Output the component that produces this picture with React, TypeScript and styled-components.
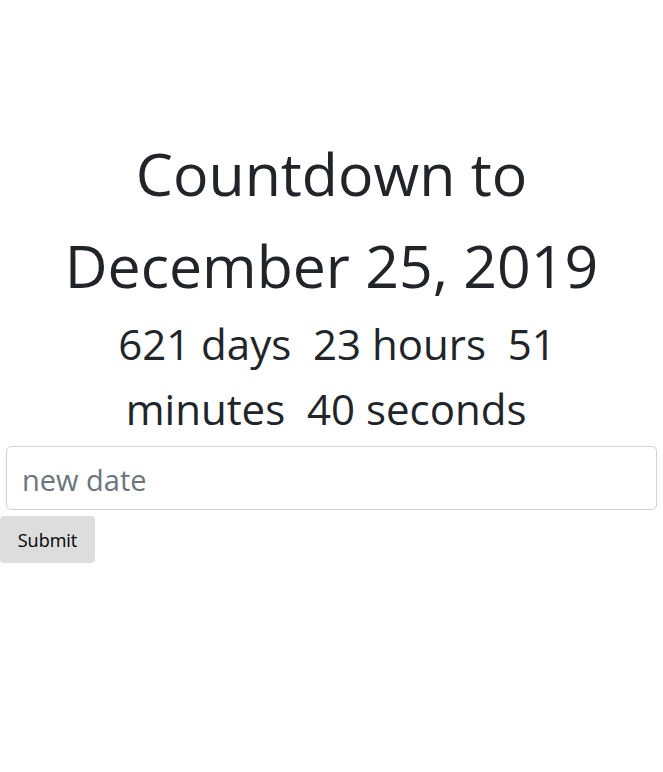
import styled, { createGlobalStyle } from 'styled-components';
import { useState } from 'react';

const GlobalStyle = createGlobalStyle`
  body {
    margin: 0;
    background: #fff;
    color: #212529;
    font-family: 'Open Sans', 'Noto Sans', sans-serif;
  }
`;

export default function App() {
  const [newDate, setNewDate] = useState('');

  const handleSubmit = (event) => {
    event.preventDefault();
    console.log(newDate);
  };

  return (
    <>
      <GlobalStyle />
      <StyledPage>
        <StyledTitle>Countdown to December 25, 2019</StyledTitle>
        <StyledClock>
          {'\u00a0621 days \u00a023 hours \u00a051 minutes \u00a040 seconds\u00a0'}
        </StyledClock>
        <StyledForm onSubmit={handleSubmit}>
          <StyledInput
            type='text'
            placeholder='new date'
            value={newDate}
            onChange={(e) => setNewDate(e.target.value)}
          />
          <StyledButton type='submit'>Submit</StyledButton>
        </StyledForm>
      </StyledPage>
    </>
  );
}

const StyledPage = styled.div`
  display: flex;
  flex-direction: column;
  padding-top: 127px;
`;

const StyledTitle = styled.h1`
  margin: 0;
  padding: 0 40px;
  text-align: center;
  font-size: 59px;
  font-weight: 400;
  line-height: 92px;
`;

const StyledClock = styled.div`
  padding: 0 50px;
  text-align: center;
  font-size: 42px;
  line-height: 65px;
`;

const StyledForm = styled.form`
  display: flex;
  flex-direction: column;
  align-items: flex-start;
  gap: 6px;
  padding-top: 5px;
`;

const StyledInput = styled.input`
  box-sizing: border-box;
  width: calc(100% - 12px);
  height: 64px;
  margin: 0 6px;
  padding: 2px 15px 0;
  border: 1px solid #ced4da;
  border-radius: 5px;
  font-family: 'Open Sans', sans-serif;
  font-size: 29px;
  color: #495057;
  outline: none;

  &::placeholder {
    color: #6c757d;
  }
`;

const StyledButton = styled.button`
  width: 95px;
  height: 47px;
  padding: 0;
  border: none;
  border-radius: 4px;
  background: #dddddd;
  color: #000;
  font-family: 'Open Sans', sans-serif;
  font-size: 18px;
`;
